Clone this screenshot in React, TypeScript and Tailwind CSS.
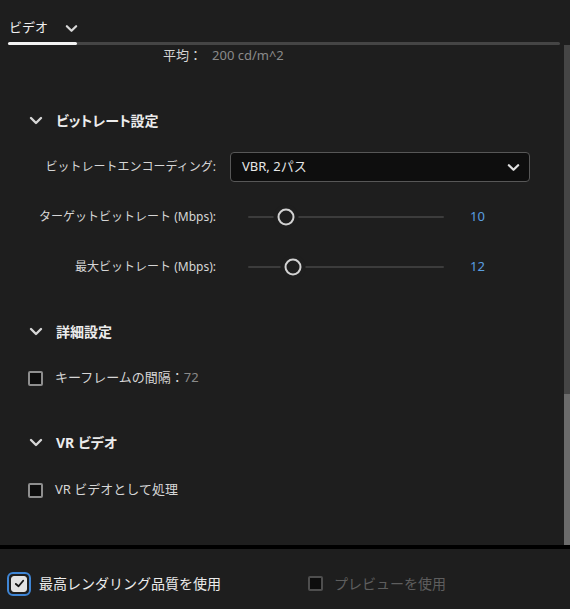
import React from "react";

const Chevron = ({ className = "" }: { className?: string }) => (
  <svg viewBox="0 0 14 9" className={className} fill="none">
    <polyline points="2,2 7,7 12,2" stroke="currentColor" strokeWidth="2.4" strokeLinecap="round" strokeLinejoin="round" />
  </svg>
);

const SectionHeader = ({ title, mt }: { title: React.ReactNode; mt: string }) => (
  <div className={`flex h-[24px] items-center pl-[29px] ${mt}`}>
    <Chevron className="h-[9px] w-[14px] text-[#d6d6d6]" />
    <span className="ml-[13px] text-[14px] font-bold text-[#ececec] [font-feature-settings:'palt']">{title}</span>
  </div>
);

const Box = () => (
  <div className="h-[15px] w-[15px] rounded-[2px] border-2 border-[#8e8e8e] bg-[#0d0d0d]" />
);

const CheckRow = ({ children, mt }: { children: React.ReactNode; mt: string }) => (
  <div className={`flex h-[24px] items-center pl-[28px] ${mt}`}>
    <Box />
    <span className="ml-[12px] text-[13px] text-[#d6d6d6]">{children}</span>
  </div>
);

const Slider = ({ label, value, pct, mt }: { label: string; value: number; pct: number; mt: string }) => (
  <div className={`flex h-[30px] items-center ${mt}`}>
    <div className="w-[216px] text-right text-[12px] text-[#d6d6d6]">{label}</div>
    <div className="relative ml-[32px] flex h-[20px] w-[196px] items-center">
      <div className="h-[2px] w-full rounded-full bg-[#3c3c3c]" />
      <div
        className="absolute top-1/2 h-[17px] w-[17px] -translate-x-1/2 -translate-y-1/2 rounded-full border-2 border-[#d2d2d2] bg-[#1e1e1e] shadow-[0_0_0_4px_#1e1e1e]"
        style={{ left: `${pct}%` }}
      />
    </div>
    <div className="ml-[26px] text-[13px] text-[#5a9fe0]">{value}</div>
  </div>
);

export default function App() {
  return (
    <div
      className="flex h-[609px] w-[570px] flex-col overflow-hidden bg-[#1e1e1e]"
      style={{ fontFamily: '"Noto Sans", "Noto Sans CJK JP", sans-serif' }}
    >
      {/* header tab */}
      <div className="flex h-[45px] w-[560px] flex-col pl-[8px] pt-[17px]">
        <div className="flex h-[22px] items-center pl-[1px]">
          <span className="text-[13px] text-[#f0f0f0]">ビデオ</span>
          <Chevron className="ml-[17px] h-[9px] w-[13px] text-[#d8d8d8]" />
        </div>
        <div className="mt-[3px] flex h-[3px] w-full rounded-full bg-[#454545]">
          <div className="h-full w-[69px] rounded-full bg-[#f2f2f2]" />
        </div>
      </div>

      {/* scroll area */}
      <div className="flex h-[500px]">
        <div className="flex flex-1 flex-col overflow-hidden">
          <div className="flex h-[22px] items-center pl-[163px] text-[13px]">
            <span className="text-[#d6d6d6]">平均：</span>
            <span className="ml-[10px] text-[#8a8a8a]">200 cd/m^2</span>
          </div>

          <SectionHeader title="ビットレート設定" mt="mt-[41px]" />

          <div className="mt-[20px] flex h-[30px] items-center">
            <div className="w-[216px] text-right text-[12px] text-[#d6d6d6]">ビットレートエンコーディング:</div>
            <div className="ml-[14px] flex h-[30px] w-[300px] items-center justify-between rounded-[4px] border border-[#575757] bg-[#0e0e0e] pl-[11px] pr-[9px]">
              <span className="text-[13px] text-[#e6e6e6]">VBR, 2パス</span>
              <Chevron className="h-[9px] w-[13px] text-[#e0e0e0]" />
            </div>
          </div>

          <Slider label="ターゲットビットレート (Mbps):" value={10} pct={19.4} mt="mt-[20px]" />
          <Slider label="最大ビットレート (Mbps):" value={12} pct={23} mt="mt-[20px]" />

          <SectionHeader title="詳細設定" mt="mt-[37px]" />
          <CheckRow mt="mt-[23px]">
            キーフレームの間隔：<span className="text-[#8a8a8a]">72</span>
          </CheckRow>

          <SectionHeader title="VR ビデオ" mt="mt-[40px]" />
          <CheckRow mt="mt-[24px]">VR ビデオとして処理</CheckRow>
        </div>
        <div className="flex w-[6px] flex-col">
          <div className="h-[349px] bg-[#454545]" />
          <div className="flex-1 bg-[#6b6b6b]" />
        </div>
      </div>

      <div className="h-[4px] bg-black" />

      {/* footer */}
      <div className="flex h-[60px] items-center pl-[7px] pt-[9px]">
        <div className="flex w-[301px] items-center">
          <div className="flex h-[24px] w-[24px] items-center justify-center rounded-[6px] border-2 border-[#3f86d6]">
            <div className="flex h-[16px] w-[16px] items-center justify-center rounded-[3px] border border-[#e4e4e4] bg-[#e2e2e2]">
              <svg viewBox="0 0 12 12" className="h-[11px] w-[11px]" fill="none">
                <polyline points="2,6.5 5,9 10,3" stroke="#141414" strokeWidth="2" strokeLinecap="round" strokeLinejoin="round" />
              </svg>
            </div>
          </div>
          <span className="ml-[8px] text-[14px] text-[#ececec]">最高レンダリング品質を使用</span>
        </div>
        <div className="flex items-center">
          <div className="h-[15px] w-[15px] rounded-[2px] border-2 border-[#4e4e4e] bg-[#0d0d0d]" />
          <span className="ml-[11px] text-[14px] text-[#5e5e5e]">プレビューを使用</span>
        </div>
      </div>
    </div>
  );
}
